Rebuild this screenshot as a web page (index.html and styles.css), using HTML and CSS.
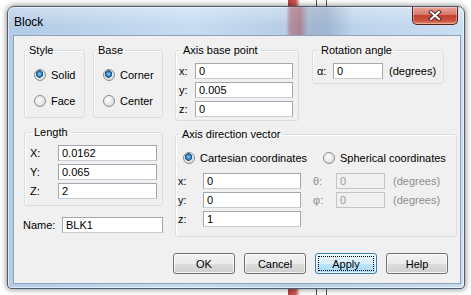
FILE: index.html
```html
<!DOCTYPE html>
<html lang="en">
<head>
  <meta charset="UTF-8">
  <title>Block</title>
  <link rel="stylesheet" href="styles.css">
</head>
<body>
  <div class="window">
    <div class="titlebar">
      <span class="title">Block</span>
      <button class="close" title="Close">
        <svg width="14" height="11" viewBox="0 0 14 11">
          <path d="M3 2 L11 9 M11 2 L3 9" stroke="#4a2a26" stroke-width="4" stroke-linecap="square"/>
          <path d="M3 2 L11 9 M11 2 L3 9" stroke="#fff" stroke-width="2" stroke-linecap="square"/>
        </svg>
      </button>
    </div>

    <div class="client">
      <div class="main">
        <!-- left column -->
        <div class="left">
          <div class="pair">
            <fieldset class="group group-style">
              <legend>Style</legend>
              <div class="radios">
                <label class="radio"><span class="dot on"></span>Solid</label>
                <label class="radio"><span class="dot"></span>Face</label>
              </div>
            </fieldset>
            <fieldset class="group group-base">
              <legend>Base</legend>
              <div class="radios">
                <label class="radio"><span class="dot on"></span>Corner</label>
                <label class="radio"><span class="dot"></span>Center</label>
              </div>
            </fieldset>
          </div>

          <fieldset class="group group-length">
            <legend>Length</legend>
            <div class="fields">
              <div class="field"><span class="lab">X:</span><input class="edit" type="text" value="0.0162"></div>
              <div class="field"><span class="lab">Y:</span><input class="edit" type="text" value="0.065"></div>
              <div class="field"><span class="lab">Z:</span><input class="edit" type="text" value="2"></div>
            </div>
          </fieldset>

          <div class="name-row">
            <span class="lab">Name:</span><input class="edit" type="text" value="BLK1">
          </div>
        </div>

        <!-- right column -->
        <div class="right">
          <div class="pair">
            <fieldset class="group group-point">
              <legend>Axis base point</legend>
              <div class="fields">
                <div class="field"><span class="lab">x:</span><input class="edit" type="text" value="0"></div>
                <div class="field"><span class="lab">y:</span><input class="edit" type="text" value="0.005"></div>
                <div class="field"><span class="lab">z:</span><input class="edit" type="text" value="0"></div>
              </div>
            </fieldset>
            <fieldset class="group group-angle">
              <legend>Rotation angle</legend>
              <div class="fields">
                <div class="field"><span class="lab">α:</span><input class="edit" type="text" value="0"><span class="unit">(degrees)</span></div>
              </div>
            </fieldset>
          </div>

          <fieldset class="group group-vector">
            <legend>Axis direction vector</legend>
            <div class="mode-row">
              <label class="radio"><span class="dot on"></span>Cartesian coordinates</label>
              <label class="radio radio-sph"><span class="dot"></span>Spherical coordinates</label>
            </div>
            <div class="fields">
              <div class="field">
                <span class="lab">x:</span><input class="edit" type="text" value="0">
                <span class="lab lab-off">θ:</span><input class="edit edit-off" type="text" value="0" disabled>
                <span class="unit unit-off">(degrees)</span>
              </div>
              <div class="field">
                <span class="lab">y:</span><input class="edit" type="text" value="0">
                <span class="lab lab-off">φ:</span><input class="edit edit-off" type="text" value="0" disabled>
                <span class="unit unit-off">(degrees)</span>
              </div>
              <div class="field">
                <span class="lab">z:</span><input class="edit" type="text" value="1">
              </div>
            </div>
          </fieldset>
        </div>
      </div>

      <div class="buttons">
        <button class="btn">OK</button>
        <button class="btn">Cancel</button>
        <button class="btn btn-focus"><span>Apply</span></button>
        <button class="btn">Help</button>
      </div>
    </div>
  </div>
</body>
</html>
```

FILE: styles.css
```css
* {
  box-sizing: border-box;
}

body, html {
  margin: 0;
  padding: 0;
  height: 100%;
  overflow: hidden;
  font-family: "Liberation Sans", Arial, sans-serif;
  font-size: 11px;
  color: #000;
}

body {
  background:
    linear-gradient(to right, transparent 288px, #b8423c 288px, #d25a52 296px, transparent 300px, transparent 316px, #555 316px, #555 317px, transparent 317px, transparent 326px, #555 326px, #555 327px, transparent 327px),
    #fff;
  padding: 6px 0 0 7px;
}

/* window frame */
.window {
  width: 458px;
  height: 283px;
  border: 1px solid #4d5c70;
  border-radius: 7px 7px 4px 4px;
  background: linear-gradient(to right, #b2cbe6, #c6dcf2 40%, #b6cde6 62%, #bcd3ec 75%, #c9ddf2);
  padding: 0 3px 4px 5px;
  box-shadow: 0 0 6px rgba(0, 0, 0, 0.55), inset 0 0 0 1px rgba(255, 255, 255, 0.6);
  display: flex;
  flex-direction: column;
}

.titlebar {
  height: 28px;
  margin: 0 -3px 0 -5px;
  padding: 0 6px 0 6px;
  display: flex;
  justify-content: space-between;
  align-items: flex-start;
  border-radius: 6px 6px 0 0;
  background:
    linear-gradient(to right, transparent 278px, rgba(170, 70, 80, 0.45) 282px, rgba(160, 70, 80, 0.55) 292px, rgba(120, 130, 160, 0.3) 300px, rgba(110, 130, 160, 0.35) 318px, transparent 345px),
    linear-gradient(to bottom, rgba(255, 255, 255, 0.35), rgba(255, 255, 255, 0) 70%);
}

.title {
  padding-top: 7px;
  font-size: 12px;
  line-height: 16px;
  color: #000;
}

.close {
  width: 46px;
  height: 18px;
  margin: 0;
  padding: 0;
  border: 1px solid #5c1f1a;
  border-top: none;
  border-radius: 0 0 5px 5px;
  background: linear-gradient(to bottom, #e9a89b, #d7776a 45%, #c4402f 50%, #cc5140 80%, #e08a6a);
  box-shadow: inset 0 0 0 1px rgba(255, 255, 255, 0.35);
  display: flex;
  align-items: center;
  justify-content: center;
}

/* client area */
.client {
  flex: 1;
  background: #f0f0f0;
  border: 1px solid #8ea3bb;
  padding: 8px 0 0 10px;
}

.main {
  display: flex;
  gap: 12px;
}

.left {
  width: 139px;
  display: flex;
  flex-direction: column;
}

.right {
  width: 282px;
  display: flex;
  flex-direction: column;
}

.pair {
  display: flex;
}

/* group boxes */
.group {
  margin: 0;
  padding: 0;
  min-width: 0;
  border: 1px solid #d5dfe5;
  border-radius: 3px;
  box-shadow: inset 1px 1px 0 #fff;
}

.group legend {
  margin-left: 2px;
  padding: 0 2px;
  line-height: 13px;
  font-size: 11px;
}

.group-style {
  width: 61px;
  height: 74px;
}

.group-base {
  width: 70px;
  height: 74px;
  margin-left: 8px;
}

.group-length {
  margin-top: 8px;
  height: 80px;
  padding: 6px 0 0 5px;
}

.group-point {
  width: 124px;
  height: 77px;
  padding: 6px 0 0 3px;
}

.group-angle {
  width: 132px;
  height: 40px;
  margin-left: 13px;
  padding: 6px 0 0 4px;
}

.group-vector {
  margin-top: 7px;
  height: 109px;
  padding: 9px 0 0 2px;
}

/* radios */
.radios {
  display: flex;
  flex-direction: column;
  gap: 10px;
  padding: 10px 0 0 9px;
}

.radio {
  display: flex;
  align-items: center;
  height: 16px;
  white-space: nowrap;
}

.dot {
  width: 12px;
  height: 12px;
  margin-right: 5px;
  border: 1px solid #8a8c8e;
  border-radius: 50%;
  background: radial-gradient(circle at 40% 35%, #fff, #e4e4e4 60%, #cfcfcf);
}

.dot.on {
  background:
    radial-gradient(circle at 45% 40%, #8fd2f4 0, #3d8cc4 2px, #164e7e 3.5px, transparent 4px),
    radial-gradient(circle at 40% 35%, #fff, #e4e4e4 60%, #cfcfcf);
}

.mode-row {
  display: flex;
  padding-left: 5px;
}

.radio-sph {
  margin-left: 16px;
}

/* edit rows */
.fields {
  display: flex;
  flex-direction: column;
  gap: 3px;
}

.field {
  display: flex;
  align-items: center;
  height: 16px;
}

.lab {
  flex: none;
}

.edit {
  height: 16px;
  margin: 0;
  padding: 0 0 0 3px;
  border: 1px solid #a4a8ae;
  border-bottom-color: #c9ced4;
  background: #fff;
  font-family: "Liberation Sans", Arial, sans-serif;
  font-size: 11px;
  color: #000;
}

.group-length .lab { width: 28px; }
.group-length .edit { width: 99px; }

.group-point .lab { width: 16px; }
.group-point .edit { width: 98px; }

.group-angle .lab { width: 16px; }
.group-angle .edit { width: 50px; }

.unit {
  margin-left: 6px;
  white-space: nowrap;
}

.group-vector .fields {
  margin-top: 7px;
}

.group-vector .lab { width: 25px; }
.group-vector .edit { width: 98px; }

.group-vector .lab-off {
  width: 23px;
  margin-left: 12px;
  color: #8d8d8d;
}

.group-vector .edit-off {
  width: 49px;
  background: #f0f0f0;
  border-color: #c4c4c4;
  color: #9a9a9a;
}

.unit-off {
  margin-left: 8px;
  color: #8d8d8d;
}

.name-row {
  display: flex;
  align-items: center;
  margin: 11px 0 0 -1px;
}

.name-row .lab { width: 39px; }
.name-row .edit { width: 101px; }

/* buttons */
.buttons {
  display: flex;
  gap: 9px;
  margin: 16px 0 0 149px;
}

.btn {
  width: 62px;
  height: 21px;
  margin: 0;
  padding: 0;
  border: 1px solid #707070;
  border-radius: 3px;
  background: linear-gradient(to bottom, #f2f2f2, #ebebeb 50%, #dddddd 50%, #cfcfcf);
  box-shadow: inset 0 0 0 1px rgba(255, 255, 255, 0.7);
  font-family: "Liberation Sans", Arial, sans-serif;
  font-size: 11px;
  color: #000;
}

.btn-focus {
  border-color: #3c7fb1;
  background: linear-gradient(to bottom, #eaf6fd, #d9f0fc 50%, #bee6fd 50%, #a7d9f5);
  padding: 2px;
}

.btn-focus span {
  display: flex;
  align-items: center;
  justify-content: center;
  height: 100%;
  border: 1px dotted #000;
}
```
